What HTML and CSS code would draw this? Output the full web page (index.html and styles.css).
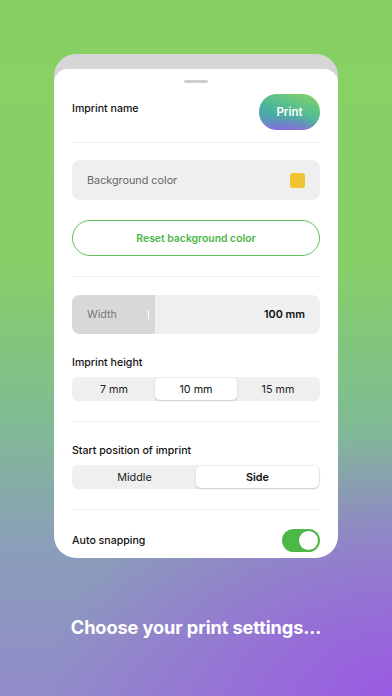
FILE: index.html
```html
<!DOCTYPE html>
<html lang="en">
<head>
    <meta charset="UTF-8">
    <meta name="viewport" content="width=device-width, initial-scale=1.0">
    <title>Print settings</title>
    <link rel="stylesheet" href="styles.css">
</head>
<body>
    <div class="screen">
        <div class="phone">
            <div class="sheet">
                <div class="handle"></div>

                <div class="row header-row">
                    <span class="label">Imprint name</span>
                    <button class="print-btn">Print</button>
                </div>
                <div class="divider"></div>

                <div class="field color-field">
                    <span>Background color</span>
                    <span class="swatch"></span>
                </div>
                <button class="reset-btn">Reset background color</button>
                <div class="divider"></div>

                <div class="field width-field">
                    <div class="width-label">
                        <span>Width</span>
                        <span class="caret"></span>
                    </div>
                    <span class="width-value">100 mm</span>
                </div>

                <div class="label section-label">Imprint height</div>
                <div class="segmented three">
                    <div class="segment">7 mm</div>
                    <div class="segment active">10 mm</div>
                    <div class="segment">15 mm</div>
                </div>
                <div class="divider"></div>

                <div class="label section-label">Start position of imprint</div>
                <div class="segmented two">
                    <div class="segment">Middle</div>
                    <div class="segment active bold">Side</div>
                </div>
                <div class="divider"></div>

                <div class="row toggle-row">
                    <span class="label">Auto snapping</span>
                    <div class="toggle"><div class="knob"></div></div>
                </div>
            </div>
        </div>
        <p class="caption">Choose your print settings...</p>
    </div>
</body>
</html>
```

FILE: styles.css
```css
body {
    margin: 0;
    padding: 0;
    font-family: Inter, "Liberation Sans", Arial, sans-serif;
    color: #111;
}

.screen {
    width: 392px;
    height: 696px;
    overflow: hidden;
    display: flex;
    flex-direction: column;
    align-items: center;
    padding-top: 54px;
    box-sizing: border-box;
    background:
        radial-gradient(ellipse 340px 260px at 100% 100%, rgba(155, 85, 228, 0.9), rgba(155, 85, 228, 0) 100%),
        linear-gradient(180deg, #87d163 0%, #86cf68 38%, #7fbf8e 58%, #8a9fb8 78%, #918bca 100%);
}

.phone {
    width: 284px;
    background: #d6d6d6;
    border-radius: 22px;
    padding-top: 15px;
    overflow: hidden;
}

.sheet {
    background: #ffffff;
    border-radius: 14px 14px 22px 22px;
    padding: 11px 18px 6px;
    height: 489px;
    box-sizing: border-box;
}

.handle {
    width: 24px;
    height: 3px;
    border-radius: 2px;
    background: #cfcfcf;
    margin: 0 auto;
}

.row {
    display: flex;
    justify-content: space-between;
    align-items: center;
}

.label {
    font-size: 10.6px;
    font-weight: 500;
    color: #111;
}

.header-row {
    margin-top: 11px;
    align-items: flex-start;
}

.header-row .label {
    margin-top: 8px;
}

.print-btn {
    width: 61px;
    height: 36px;
    border: none;
    border-radius: 18px;
    color: #fff;
    font-family: inherit;
    font-size: 11.5px;
    font-weight: 600;
    background:
        radial-gradient(ellipse 40px 18px at 50% 110%, rgba(150, 95, 225, 0.95) 0%, rgba(150, 95, 225, 0) 100%),
        linear-gradient(200deg, #8ad35f 0%, #5cc28a 35%, #48b0a2 60%, #5c93c0 85%, #8a6cd8 100%);
}

.divider {
    height: 1px;
    background: #eeeeee;
    margin-top: 12px;
}

.field {
    display: flex;
    align-items: center;
    justify-content: space-between;
    background: #efefef;
    border-radius: 8px;
    font-size: 10.8px;
    color: #666;
}

.color-field {
    height: 40px;
    margin-top: 17px;
    padding: 0 15px;
}

.swatch {
    width: 15px;
    height: 15px;
    border-radius: 3px;
    background: #f0c431;
}

.reset-btn {
    display: block;
    width: 100%;
    height: 36px;
    margin-top: 20px;
    border: 1.5px solid #62c15c;
    border-radius: 18px;
    background: #fff;
    color: #4cb648;
    font-family: inherit;
    font-size: 10.4px;
    font-weight: 600;
}

.reset-btn + .divider {
    margin-top: 20px;
}

.width-field {
    height: 39px;
    margin-top: 18px;
    overflow: hidden;
    padding-right: 15px;
}

.width-label {
    width: 83px;
    height: 100%;
    background: #d8d8d8;
    display: flex;
    align-items: center;
    justify-content: space-between;
    padding: 0 6px 0 15px;
    box-sizing: border-box;
    color: #777;
}

.caret {
    width: 1.5px;
    height: 9px;
    background: #fff;
}

.width-value {
    font-weight: 600;
    color: #111;
}

.section-label {
    margin-top: 22px;
    line-height: 14px;
}

.segmented {
    display: flex;
    height: 24px;
    margin-top: 7px;
    background: #efefef;
    border-radius: 6px;
    padding: 1px;
    box-sizing: border-box;
}

.segment {
    flex: 1;
    display: flex;
    align-items: center;
    justify-content: center;
    font-size: 10.8px;
    color: #222;
    border-radius: 5px;
}

.segment.active {
    background: #fff;
    box-shadow: 0 1px 2px rgba(0, 0, 0, 0.15);
    color: #111;
}

.segment.bold {
    font-weight: 600;
}

.segmented + .divider {
    margin-top: 20px;
}

.toggle-row {
    margin-top: 19px;
}

.toggle {
    width: 38px;
    height: 23px;
    border-radius: 12px;
    background: #4db848;
    position: relative;
}

.knob {
    position: absolute;
    top: 2px;
    right: 2px;
    width: 19px;
    height: 19px;
    border-radius: 50%;
    background: #fff;
}

.caption {
    margin: 58px 0 0;
    color: #fff;
    font-size: 18.2px;
    font-weight: 700;
    letter-spacing: -0.1px;
}
```
